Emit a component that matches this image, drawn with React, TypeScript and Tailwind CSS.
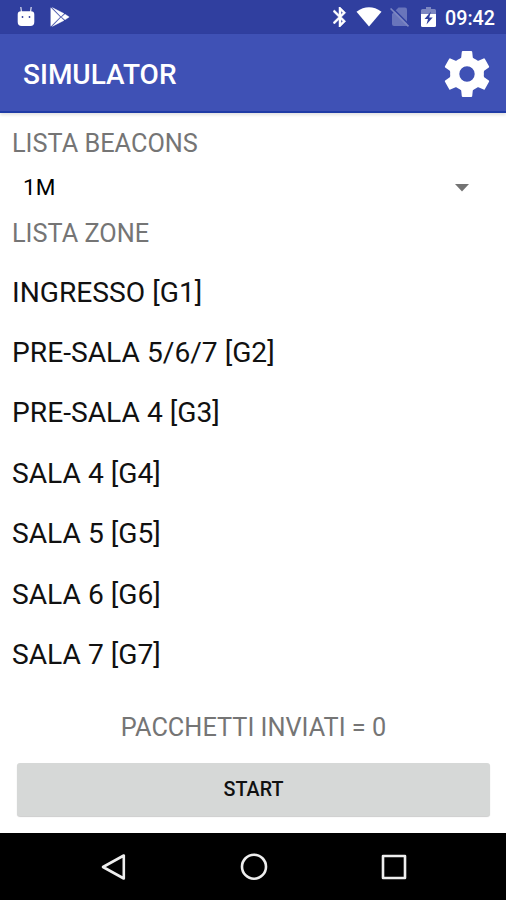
import type { ReactNode } from 'react';

const zones = [
  'INGRESSO [G1]',
  'PRE-SALA 5/6/7 [G2]',
  'PRE-SALA 4 [G3]',
  'SALA 4 [G4]',
  'SALA 5 [G5]',
  'SALA 6 [G6]',
  'SALA 7 [G7]',
];

const teeth = [0, 60, 120, 180, 240, 300];

function StatusBar() {
  return (
    <div className="flex h-[34px] shrink-0 items-center bg-[#303f9f] pl-[17px] pr-[10px] text-white">
      {/* Debug notification */}
      <svg width="18" height="22" viewBox="0 0 18 22" fill="currentColor">
        <path d="M4.500 6 3.800 1M13.500 6l.7-5" stroke="currentColor" strokeWidth="1.300" opacity=".8" />
        <path d="M.7 8.500Q.7 5.300 4 5.300h10q3.300 0 3.300 3.200V16q0 4-4 4H4.700q-4 0-4-4z" />
        <circle cx="5.500" cy="11" r=".9" fill="#303f9f" />
        <circle cx="12.500" cy="11" r=".9" fill="#303f9f" />
      </svg>
      {/* Play Store notification */}
      <svg className="ml-[15px]" width="20" height="20" viewBox="0 0 20 20">
        <path d="M.8.8 10 10 .8 19.200zM2.200.6 14 6.600 10.900 9.400zM10.900 10.600 14 13.400 2.200 19.400zM11.800 10 15 7.200 19.200 10 15 12.800z" fill="currentColor" stroke="currentColor" strokeWidth=".4" />
      </svg>
      <div className="flex-1" />
      <svg width="14" height="20" viewBox="5 2 14 20" fill="currentColor" stroke="currentColor" strokeWidth=".5">
        <path d="M17.710 7.710 12 2h-1v7.590L6.410 5 5 6.410 10.590 12 5 17.590 6.410 19 11 14.410V22h1l5.710-5.710-4.300-4.290 4.300-4.290zM13 5.830l1.880 1.880L13 9.590V5.830zm1.880 10.460L13 18.170v-3.760l1.880 1.880z" />
      </svg>
      <svg className="ml-[9px]" width="26" height="20" viewBox="0 0 26 20" fill="currentColor">
        <path d="M.5 4.700Q13-4 25.500 4.700L13 19.500z" />
      </svg>
      <svg className="ml-[8px]" width="20" height="20" viewBox="0 0 20 20">
        <path d="M8.500.5H15q2 0 2 2V19H4q-2 0-2-2V7z" fill="#6975bb" />
        <path d="M2.500 1 19.500 18" stroke="#303f9f" strokeWidth="1.500" />
        <path d="M.6 1.500 18.500 19.400" stroke="#7d87c2" strokeWidth="1.600" />
      </svg>
      <svg className="ml-[11px]" width="15" height="20" viewBox="0 0 15 20">
        <path d="M5 0h5v2h3.500Q15 2 15 3.500V8H0V3.500Q0 2 1.500 2H5z" fill="#7d87c1" />
        <path d="M0 7h15v11.500q0 1.500-1.500 1.500h-12Q0 20 0 18.500z" fill="currentColor" />
        <path d="M10 4.500 3.500 12H7l-1.500 5.500L11.700 10.500H8.200z" fill="#303f9f" />
      </svg>
      <span className="ml-[9px] w-[51px] whitespace-nowrap pt-[3px] text-[19.700px] font-medium">09:42</span>
    </div>
  );
}

function AppBar() {
  return (
    <header className="relative flex h-[79px] shrink-0 items-center justify-between border-b-2 border-[#1f3ba6] bg-[#3f51b5] pl-[23px] pr-[15px] text-white shadow-[0_2px_3px_rgba(0,0,0,0.12)]">
      <h1 className="pt-[4px] text-[28px] font-medium leading-none">SIMULATOR</h1>
      <svg className="mt-[2px]" width="48" height="48" viewBox="-24 -24 48 48" fill="currentColor">
        <circle r="12.300" fill="none" stroke="currentColor" strokeWidth="9.200" />
        {teeth.map((angle) => (
          <path
            key={angle}
            d="M-7.500-13.500-5.800-16.500-5.200-22.200Q-5-23-4.200-23H4.200Q5-23 5.200-22.200L5.800-16.500 7.500-13.500z"
            transform={`rotate(${angle})`}
          />
        ))}
      </svg>
    </header>
  );
}

function Label({ children }: { children: ReactNode }) {
  return <div className="flex h-[30px] items-center pl-3 text-[25.300px] text-[#757575]">{children}</div>;
}

function NavBar() {
  return (
    <nav className="flex h-[67px] shrink-0 items-center justify-between bg-black pl-[100px] pr-[99px] text-[#eee]">
      <svg width="28" height="30" viewBox="0 0 28 30" fill="none" stroke="currentColor" strokeWidth="2.600" strokeLinejoin="round">
        <path d="M23.800 3.500v23L3 15z" />
      </svg>
      <svg width="30" height="30" viewBox="0 0 30 30" fill="none" stroke="currentColor" strokeWidth="2.600">
        <circle cx="14" cy="14.700" r="12" />
      </svg>
      <svg width="26" height="26" viewBox="0 0 26 26" fill="none" stroke="currentColor" strokeWidth="2.600" strokeLinejoin="round">
        <rect x="2" y="2" width="22" height="22" />
      </svg>
    </nav>
  );
}

export default function App() {
  return (
    <div className="flex h-[900px] w-[506px] flex-col overflow-hidden bg-white font-['Roboto',sans-serif]">
      <StatusBar />
      <AppBar />
      <main className="flex flex-1 flex-col pt-4">
        <Label>LISTA BEACONS</Label>
        <button className="flex h-[60px] items-center justify-between pb-[2px] pl-[23px] pr-[37px] text-[22.500px] text-black">
          <span>1M</span>
          <svg width="14" height="8" viewBox="0 0 14 8" fill="#737373">
            <path d="M0 0h14L7 7.500z" />
          </svg>
        </button>
        <Label>LISTA ZONE</Label>
        <ul className="flex flex-col pt-[13.600px]">
          {zones.map((zone) => (
            <li key={zone} className="flex h-[60.400px] items-center pl-3 text-[28.200px] text-[#111]">
              {zone}
            </li>
          ))}
        </ul>
        <p className="mt-auto pl-px text-center text-[25.300px] leading-[30px] text-[#757575]">PACCHETTI INVIATI = 0</p>
        <button className="mb-[17px] ml-[17px] mr-[16px] mt-[20px] h-[53px] rounded-[3px] bg-[#d6d8d7] text-[19.700px] font-medium text-[#111] shadow-[0_1px_1px_rgba(0,0,0,0.2)]">
          START
        </button>
      </main>
      <NavBar />
    </div>
  );
}
